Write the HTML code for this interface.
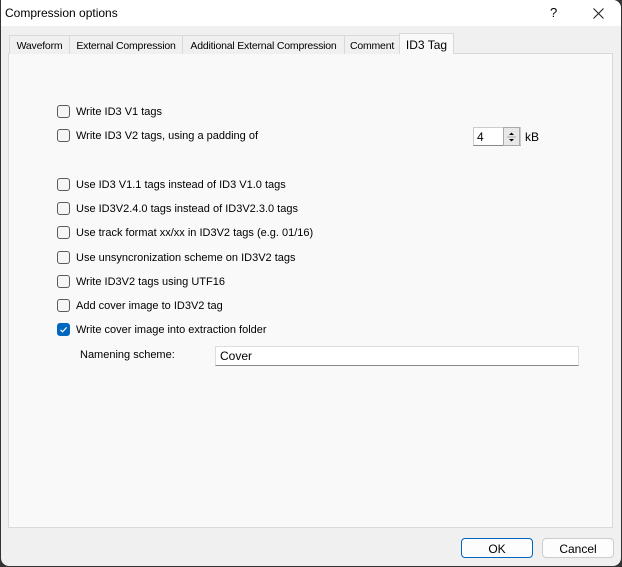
<!DOCTYPE html>
<html><head><style>
*{margin:0;padding:0;box-sizing:border-box}
body{width:622px;height:567px;background:#333;font-family:"Liberation Sans",sans-serif;font-size:11px;color:#000;overflow:hidden;position:relative}
.win{position:absolute;left:1px;top:0;width:620px;height:566px;background:#f0f0f0;border-radius:0 8px 8px 8px;overflow:hidden}
.title{position:absolute;left:0;top:0;width:620px;height:26px;background:#fff}
.title span{position:absolute;left:4px;top:6px;font-size:12px}
.abs{position:absolute;white-space:nowrap}
.tab{position:absolute;top:35px;height:19px;border:1px solid #d9d9d9;border-bottom:none;background:#f0f0f0;font-size:10.5px;letter-spacing:-0.2px;padding-top:4px;text-align:center;white-space:nowrap;overflow:hidden}
.panel{position:absolute;left:7px;top:53px;width:605px;height:475px;background:#f9f9f9;border:1px solid #d9d9d9}
.cb{position:absolute;left:56px;width:13px;height:13px;border:1px solid #5a5a5a;border-radius:3px;background:#f6f6f6}
.lbl{position:absolute;left:75px}
.btn{position:absolute;top:538px;height:20px;border:1px solid #ccc;border-radius:4px;background:#fdfdfd;text-align:center;font-size:12px;padding-top:3px}
</style></head><body>
<div class="win">
<div class="title"><span>Compression options</span>
<span style="left:549px;font-size:13px;top:5px">?</span>
<svg style="position:absolute;left:592px;top:8px" width="11" height="11"><path d="M0.5 0.5L10.5 10.5M10.5 0.5L0.5 10.5" stroke="#222" stroke-width="1.1"/></svg>
</div>
<div class="panel"></div>
<div class="tab" style="left:8px;width:61px">Waveform</div>
<div class="tab" style="left:68px;width:114px">External Compression</div>
<div class="tab" style="left:181px;width:163px">Additional External Compression</div>
<div class="tab" style="left:343px;width:56px">Comment</div>
<div class="tab" style="left:398px;width:55px;top:33px;height:21px;background:#f9f9f9;padding-top:4px;font-size:12px;letter-spacing:0">ID3 Tag</div>

<div class="cb" style="top:105px"></div><div class="lbl abs" style="top:106px">Write ID3 V1 tags</div>
<div class="cb" style="top:129px"></div><div class="lbl abs" style="top:130px">Write ID3 V2 tags, using a padding of</div>
<div class="abs" style="left:472px;top:127px;width:48px;height:19px;background:#fff;border:1px solid #ccc;border-bottom:1px solid #888"></div>
<div class="abs" style="left:476px;top:130px;font-size:12px">4</div>
<div class="abs" style="left:502px;top:127px;width:17px;height:19px;border:1px solid #aaa;background:#e8e8e8"></div>
<svg class="abs" style="left:505px;top:130px" width="11" height="14"><path d="M3 5L5.5 2.5L8 5Z M3 9L5.5 11.5L8 9Z" fill="#000"/><path d="M1 7H10" stroke="#aaa"/></svg>
<div class="abs" style="left:524px;top:130px;font-size:12px">kB</div>

<div class="cb" style="top:178px"></div><div class="lbl abs" style="top:179px">Use ID3 V1.1 tags instead of ID3 V1.0 tags</div>
<div class="cb" style="top:202px"></div><div class="lbl abs" style="top:203px">Use ID3V2.4.0 tags instead of ID3V2.3.0 tags</div>
<div class="cb" style="top:226px"></div><div class="lbl abs" style="top:227px">Use track format xx/xx in ID3V2 tags (e.g. 01/16)</div>
<div class="cb" style="top:251px"></div><div class="lbl abs" style="top:252px">Use unsyncronization scheme on ID3V2 tags</div>
<div class="cb" style="top:275px"></div><div class="lbl abs" style="top:276px">Write ID3V2 tags using UTF16</div>
<div class="cb" style="top:299px"></div><div class="lbl abs" style="top:300px">Add cover image to ID3V2 tag</div>
<div class="cb" style="top:323px;background:#0067c0;border-color:#0067c0"></div>
<svg class="abs" style="left:57px;top:324px" width="11" height="11"><path d="M2.5 5.8L4.6 7.8L8.6 3.4" stroke="#fff" stroke-width="1.2" fill="none"/></svg>
<div class="lbl abs" style="top:324px">Write cover image into extraction folder</div>
<div class="abs" style="left:79px;top:349px">Namening scheme:</div>
<div class="abs" style="left:214px;top:346px;width:364px;height:20px;background:#fff;border:1px solid #ddd;border-bottom:1px solid #888"></div>
<div class="abs" style="left:219px;top:349px;font-size:12px">Cover</div>

<div class="btn" style="left:460px;width:72px;border:1px solid #0067c0">OK</div>
<div class="btn" style="left:541px;width:72px">Cancel</div>
</div>
</body></html>
